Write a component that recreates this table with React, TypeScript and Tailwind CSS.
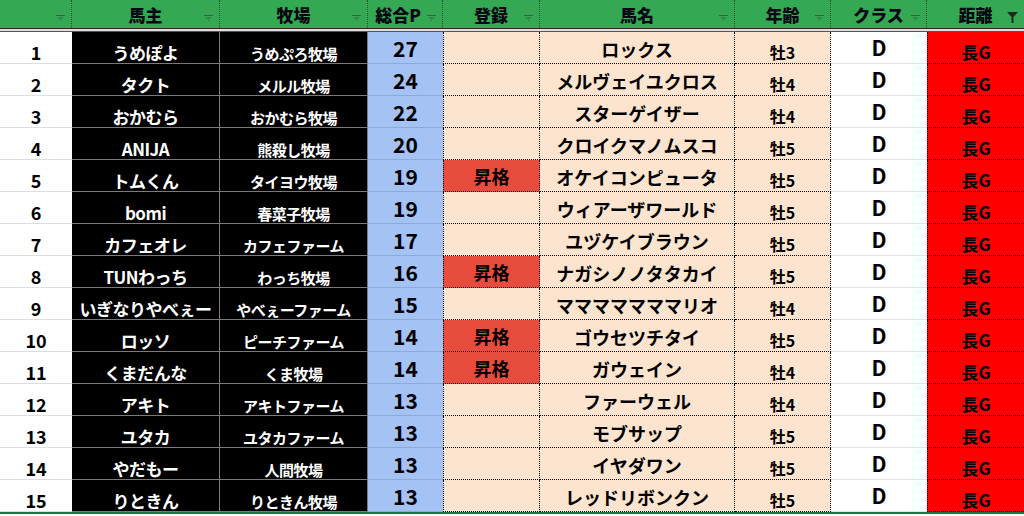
import React from 'react';

type Row = [number, string, string, number, string, string, string];

const rows: Row[] = [
    [1, 'うめぽよ', 'うめぷろ牧場', 27, '', 'ロックス', '牡3'],
    [2, 'タクト', 'メルル牧場', 24, '', 'メルヴェイユクロス', '牡4'],
    [3, 'おかむら', 'おかむら牧場', 22, '', 'スターゲイザー', '牡4'],
    [4, 'ANIJA', '熊殺し牧場', 20, '', 'クロイクマノムスコ', '牡5'],
    [5, 'トムくん', 'タイヨウ牧場', 19, '昇格', 'オケイコンピュータ', '牡5'],
    [6, 'bomi', '春菜子牧場', 19, '', 'ウィアーザワールド', '牡5'],
    [7, 'カフェオレ', 'カフェファーム', 17, '', 'ユヅケイブラウン', '牡5'],
    [8, 'TUNわっち', 'わっち牧場', 16, '昇格', 'ナガシノノタタカイ', '牡5'],
    [9, 'いぎなりやべぇー', 'やべぇーファーム', 15, '', 'マママママママリオ', '牡4'],
    [10, 'ロッソ', 'ピーチファーム', 14, '昇格', 'ゴウセツチタイ', '牡5'],
    [11, 'くまだんな', 'くま牧場', 14, '昇格', 'ガウェイン', '牡4'],
    [12, 'アキト', 'アキトファーム', 13, '', 'ファーウェル', '牡4'],
    [13, 'ユタカ', 'ユタカファーム', 13, '', 'モブサップ', '牡5'],
    [14, 'やだもー', '人間牧場', 13, '', 'イヤダワン', '牡5'],
    [15, 'りときん', 'りときん牧場', 13, '', 'レッドリボンクン', '牡5'],
];

const cols = 'grid grid-cols-[72px_148px_148px_75px_97px_195px_96px_96px_97px]';

const FilterIcon: React.FC = () => (
    <svg width="9" height="6" viewBox="0 0 9 6" className="absolute right-[6px] top-[15px]">
        <rect x="0" y="0" width="9" height="1" fill="#3b5f44" />
        <rect x="2" y="2.5" width="5" height="1" fill="#3b5f44" />
        <rect x="4" y="5" width="1" height="1" fill="#3b5f44" />
    </svg>
);

const FunnelIcon: React.FC = () => (
    <svg width="11" height="11" viewBox="0 0 11 11" className="absolute right-[6px] top-[12px]">
        <path d="M0 0 H11 L6.5 5 V11 H4.5 V5 Z" fill="#1d2a20" />
    </svg>
);

const headers = ['', '馬主', '牧場', '総合P', '登録', '馬名', '年齢', 'クラス', '距離'];

export default function App() {
    return (
        <div
            className="w-[1024px] h-[516px] overflow-hidden bg-white text-black font-bold"
            style={{ fontFamily: '"Noto Sans CJK JP", "Noto Sans", sans-serif' }}
        >
            {/* header */}
            <div className={`${cols} h-[28px] bg-[#34a852]`}>
                {headers.map((h, i) => (
                    <div
                        key={i}
                        className={`relative flex items-center justify-center text-[17px] leading-none border-[#24552f] border-dotted ${i < 8 ? 'border-r' : ''}`}
                    >
                        <span className={`font-black text-gray-950 ${i === 3 ? 'pr-[14px]' : ''}`}>{h}</span>
                        {i === 8 ? <FunnelIcon /> : <FilterIcon />}
                    </div>
                ))}
            </div>
            <div className="h-[3px] bg-[#dcdde3] border-t border-[#2b2b2b]" />
            <div className="h-[1px] bg-[#555]" />

            {/* body */}
            {rows.map(([n, owner, farm, pts, reg, horse, age]) => (
                <div key={n} className={`${cols} h-[32px]`}>
                    <div className="flex items-end justify-center pb-[2px] text-[18px] leading-none border-b border-[#dedede]">
                        {n}
                    </div>
                    <div className="flex items-end justify-center pb-[2px] bg-black text-white text-[17px] leading-none border-b border-r border-[#7a7a7a] whitespace-nowrap tracking-[-0.5px]">
                        {owner}
                    </div>
                    <div className="flex items-end justify-center pb-[2px] bg-black text-white text-[15px] leading-none border-b border-r border-[#7a7a7a] whitespace-nowrap tracking-[-0.5px]">
                        {farm}
                    </div>
                    <div className="flex items-center justify-center pt-[2px] bg-[#a4c2f4] text-[21px] leading-none border-b border-[#8ea9d8]">
                        {pts}
                    </div>
                    <div
                        className={`flex items-start justify-center pt-[7px] text-[18px] leading-none border-b border-l border-r border-dotted border-black ${reg ? 'bg-[#e74c3c]' : 'bg-[#fde4cf]'}`}
                    >
                        {reg}
                    </div>
                    <div className="flex items-center justify-center pt-[3px] bg-[#fde4cf] text-[18px] leading-none border-b border-r border-dotted border-black whitespace-nowrap">
                        {horse}
                    </div>
                    <div className="flex items-end justify-center pb-[3px] bg-[#fde4cf] text-[16px] leading-none border-b border-r border-dotted border-black">
                        {age}
                    </div>
                    <div className="flex items-start justify-center pt-[5px] bg-white text-[21px] leading-none border-b border-[#e2e2e2]">
                        D
                    </div>
                    <div className="flex items-end justify-center pb-[3px] bg-[#ff0000] text-[17px] leading-none border-b border-l border-dotted border-black">
                        長G
                    </div>
                </div>
            ))}
            <div className="h-[2px] bg-[#217346]" />
        </div>
    );
}
